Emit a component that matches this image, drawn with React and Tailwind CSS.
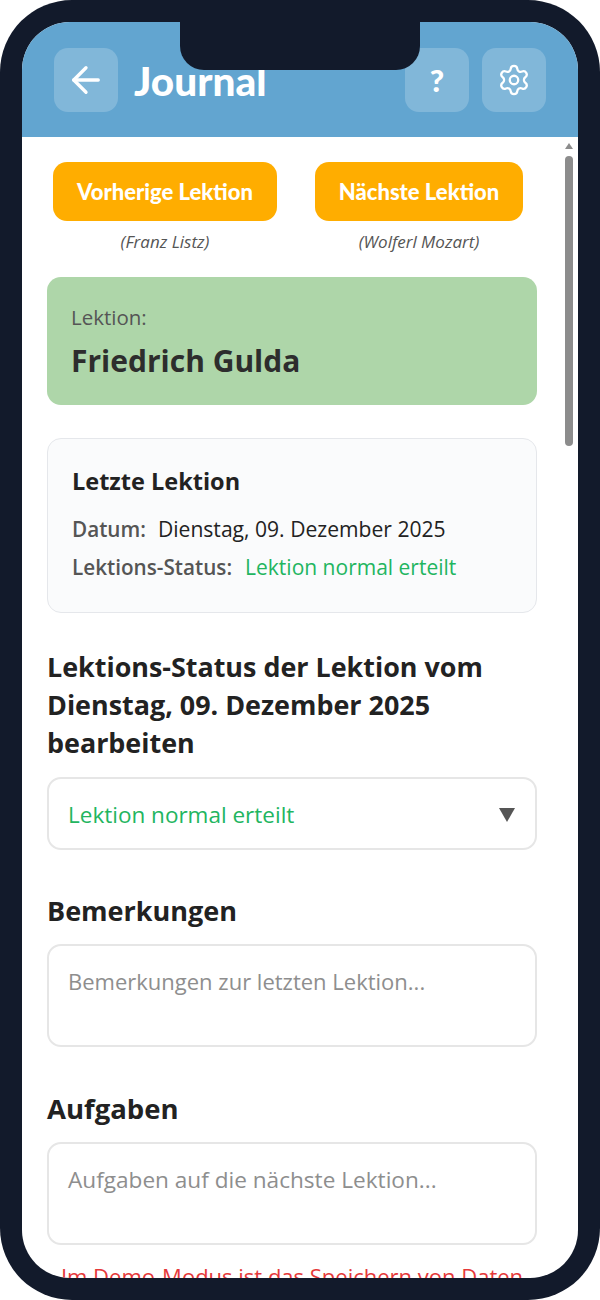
import React from "react";
import { ArrowLeft, Settings } from "lucide-react";

const body = "font-['Open_Sans','Noto_Sans',sans-serif]";
const display = "font-['Lato','Open_Sans',sans-serif]";

const App = () => {
  return (
    <div className="w-[600px] h-[1300px] bg-white">
      <div className={`relative w-full h-full rounded-[72px] bg-[#121a2b] p-[22px] ${body}`}>
        {/* notch */}
        <div className="absolute z-10 left-[180px] top-[22px] w-[240px] h-[48px] bg-[#121a2b] rounded-b-[24px]" />

        <div className="flex flex-col w-full h-full rounded-[48px] overflow-hidden bg-white">
          <header className="flex items-start h-[115px] shrink-0 bg-[#62a5d0] px-[32px] pt-[26px]">
            <button className="flex items-center justify-center w-[64px] h-[64px] rounded-[14px] bg-white/20 text-white">
              <ArrowLeft size={42} strokeWidth={1.9} />
            </button>
            <h1 className={`ml-[16px] mt-[11px] text-[40.5px] leading-[44px] font-black text-white ${display}`}>Journal</h1>
            <div className="ml-auto flex gap-[13px]">
              <button className={`flex items-center justify-center w-[64px] h-[64px] rounded-[14px] bg-white/20 text-white text-[31px] font-black ${display}`}>
                ?
              </button>
              <button className="flex items-center justify-center w-[64px] h-[64px] rounded-[14px] bg-white/20 text-white">
                <Settings size={34} strokeWidth={1.6} />
              </button>
            </div>
          </header>

          <div className="flex flex-1 min-h-0">
            <main className="w-[540px] shrink-0 px-[25px] pt-[25px]">
              <div className="flex pl-[6px]">
                <div className="flex flex-col items-center w-[224px]">
                  <button className={`w-full h-[59px] rounded-[14px] bg-[#ffad00] text-white text-[22px] font-black ${display}`}>
                    Vorherige Lektion
                  </button>
                  <span className="mt-[11px] text-[17px] leading-[20px] italic text-[#555]">(Franz Listz)</span>
                </div>
                <div className="flex flex-col items-center w-[208px] ml-[38px]">
                  <button className={`w-full h-[59px] rounded-[14px] bg-[#ffad00] text-white text-[22px] font-black ${display}`}>
                    Nächste Lektion
                  </button>
                  <span className="mt-[11px] text-[17px] leading-[20px] italic text-[#555]">(Wolferl Mozart)</span>
                </div>
              </div>

              <section className="mt-[25px] h-[128px] rounded-[14px] bg-[#aed6a9] px-[24px] pt-[27px]">
                <p className="text-[20.5px] leading-[26px] text-[#555]">Lektion:</p>
                <p className="mt-[11px] text-[30px] leading-[40px] font-bold text-[#2d2d2d]">Friedrich Gulda</p>
              </section>

              <section className="mt-[33px] h-[175px] rounded-[14px] border border-[#e5e7eb] bg-[#fafbfc] px-[24px] pt-[26px]">
                <h2 className="text-[23.5px] leading-[32px] font-bold text-[#222]">Letzte Lektion</h2>
                <p className="mt-[18px] text-[20.7px] leading-[28px]">
                  <span className="font-semibold text-[#555]">Datum:</span>
                  <span className="ml-[12px] text-[21.1px] text-[#222]">Dienstag, 09. Dezember 2025</span>
                </p>
                <p className="mt-[10px] text-[20.7px] leading-[28px]">
                  <span className="font-semibold text-[#555]">Lektions-Status:</span>
                  <span className="ml-[13px] text-[21px] text-[#22b560]">Lektion normal erteilt</span>
                </p>
              </section>

              <h2 className="mt-[35px] text-[26.9px] leading-[38px] font-bold text-[#222]">
                Lektions-Status der Lektion vom Dienstag, 09. Dezember 2025 bearbeiten
              </h2>
              <div className="mt-[15px] flex items-center justify-between h-[73px] rounded-[14px] border-2 border-[#e6e6e6] pl-[19px] pr-[20px]">
                <span className="pt-[2px] text-[22.5px] text-[#22b560]">Lektion normal erteilt</span>
                <span className="mt-[2px] w-0 h-0 border-x-[8px] border-x-transparent border-t-[14px] border-t-[#555]" />
              </div>

              <h2 className="mt-[42px] text-[27px] leading-[38px] font-bold text-[#222]">Bemerkungen</h2>
              <div className="mt-[14px] h-[103px] rounded-[14px] border-2 border-[#e6e6e6] px-[19px] pt-[19px] text-[22px] leading-[32px] text-[#8e8e8e]">
                Bemerkungen zur letzten Lektion...
              </div>

              <h2 className="mt-[43px] text-[27.5px] leading-[38px] font-bold text-[#222]">Aufgaben</h2>
              <div className="mt-[14px] h-[103px] rounded-[14px] border-2 border-[#e6e6e6] px-[19px] pt-[20px] text-[22.6px] leading-[32px] text-[#8e8e8e]">
                Aufgaben auf die nächste Lektion...
              </div>

              <p className="mt-[15px] text-center text-[22px] leading-[32px] whitespace-nowrap text-[#e5393a]">
                Im Demo-Modus ist das Speichern von Daten
              </p>
            </main>

            {/* scrollbar */}
            <div className="flex-1 flex flex-col items-center pt-[6px] pr-[2px]">
              <span className="w-0 h-0 border-x-[4px] border-x-transparent border-b-[6px] border-b-[#8c8c8c]" />
              <span className="mt-[7px] w-[8px] h-[290px] rounded-full bg-[#8c8c8c]" />
            </div>
          </div>
        </div>
      </div>
    </div>
  );
};

export default App;
